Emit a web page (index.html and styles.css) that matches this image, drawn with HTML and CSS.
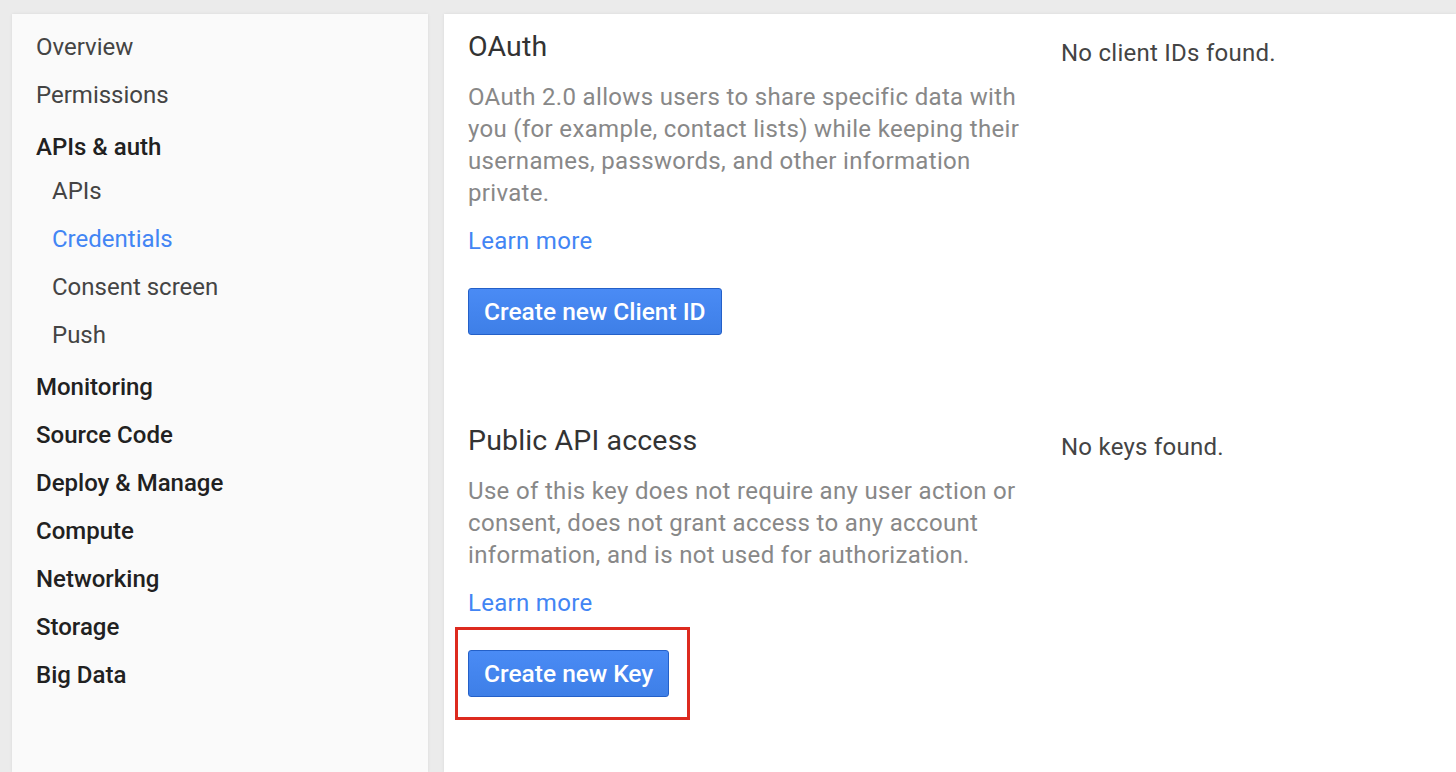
FILE: index.html
```html
<!DOCTYPE html>
<html lang="en">
<head>
<meta charset="utf-8">
<title>Credentials</title>
<link rel="stylesheet" href="styles.css">
</head>
<body>
<div class="layout">
  <nav class="sidebar">
    <a class="nav-item">Overview</a>
    <a class="nav-item">Permissions</a>
    <div class="nav-group">APIs &amp; auth</div>
    <a class="nav-item sub">APIs</a>
    <a class="nav-item sub active">Credentials</a>
    <a class="nav-item sub">Consent screen</a>
    <a class="nav-item sub">Push</a>
    <a class="nav-item top first-after">Monitoring</a>
    <a class="nav-item top">Source Code</a>
    <a class="nav-item top">Deploy &amp; Manage</a>
    <a class="nav-item top">Compute</a>
    <a class="nav-item top">Networking</a>
    <a class="nav-item top">Storage</a>
    <a class="nav-item top">Big Data</a>
  </nav>
  <main class="content">
    <section class="row">
      <div class="info">
        <h2 class="heading">OAuth</h2>
        <p class="desc">OAuth 2.0 allows users to share specific data with you (for example, contact lists) while keeping their usernames, passwords, and other information private.</p>
        <a class="learn">Learn more</a>
        <div class="actions">
          <button class="btn">Create new Client ID</button>
        </div>
      </div>
      <div class="status">No client IDs found.</div>
    </section>
    <section class="row second">
      <div class="info">
        <h2 class="heading">Public API access</h2>
        <p class="desc">Use of this key does not require any user action or consent, does not grant access to any account information, and is not used for authorization.</p>
        <a class="learn">Learn more</a>
        <div class="actions">
          <span class="highlight"><button class="btn">Create new Key</button></span>
        </div>
      </div>
      <div class="status">No keys found.</div>
    </section>
  </main>
</div>
</body>
</html>
```

FILE: styles.css
```css
html, body {
  margin: 0;
  padding: 0;
  height: 100%;
  overflow: hidden;
}
body {
  background: #ebebeb;
  font-family: Roboto, "Liberation Sans", Arial, sans-serif;
  color: #444;
}
.layout {
  display: flex;
  gap: 16px;
  height: 100vh;
  box-sizing: border-box;
  padding: 14px 0 0 12px;
}
.sidebar {
  width: 416px;
  flex: none;
  background: #fafafa;
  box-shadow: 0 0 3px rgba(0,0,0,0.08);
  padding-top: 9px;
  box-sizing: border-box;
  display: flex;
  flex-direction: column;
}
.nav-item {
  display: block;
  height: 48px;
  line-height: 48px;
  padding-left: 24px;
  font-size: 24px;
  color: #444;
  text-decoration: none;
}
.nav-item.sub {
  padding-left: 40px;
}
.nav-item.active {
  color: #4285f4;
}
.nav-group {
  margin-top: 8px;
  height: 40px;
  line-height: 40px;
  padding-left: 24px;
  font-size: 24px;
  font-weight: 500;
  color: #212121;
}
.nav-item.top {
  font-weight: 500;
  color: #212121;
}
.nav-item.first-after {
  margin-top: 4px;
}
.content {
  flex: 1;
  background: #fff;
  box-shadow: 0 0 3px rgba(0,0,0,0.08);
  padding: 15px 0 0 24px;
}
.row {
  display: flex;
}
.row.second {
  margin-top: 88px;
}
.info {
  width: 572px;
  flex: none;
}
.status {
  margin-left: 21px;
  margin-top: 6px;
  font-size: 24px;
  line-height: 36px;
  letter-spacing: 0.25px;
  color: #444;
}
.heading {
  margin: 0;
  font-size: 28.5px;
  line-height: 36px;
  letter-spacing: 0.15px;
  font-weight: 400;
  color: #333;
}
.desc {
  margin: 16px 0 0;
  max-width: 565px;
  font-size: 24px;
  line-height: 32px;
  letter-spacing: 0.33px;
  color: #888;
}
.learn {
  display: block;
  margin-top: 16px;
  font-size: 24px;
  line-height: 32px;
  letter-spacing: 0.3px;
  color: #4285f4;
  text-decoration: none;
}
.actions {
  margin-top: 31px;
  display: flex;
}
.highlight {
  position: relative;
  display: inline-flex;
}
.highlight::after {
  content: "";
  position: absolute;
  top: -23px;
  bottom: -23px;
  left: -13px;
  right: -21px;
  border: 3px solid #dd2a1f;
  pointer-events: none;
}
.btn {
  height: 47px;
  padding: 0 15px;
  border: 1px solid #2460c8;
  border-radius: 3px;
  background: linear-gradient(#4a8bf5, #3e7fe7);
  color: #fff;
  font-family: Roboto, "Liberation Sans", Arial, sans-serif;
  font-size: 24.5px;
  font-weight: 500;
  cursor: pointer;
}
```
